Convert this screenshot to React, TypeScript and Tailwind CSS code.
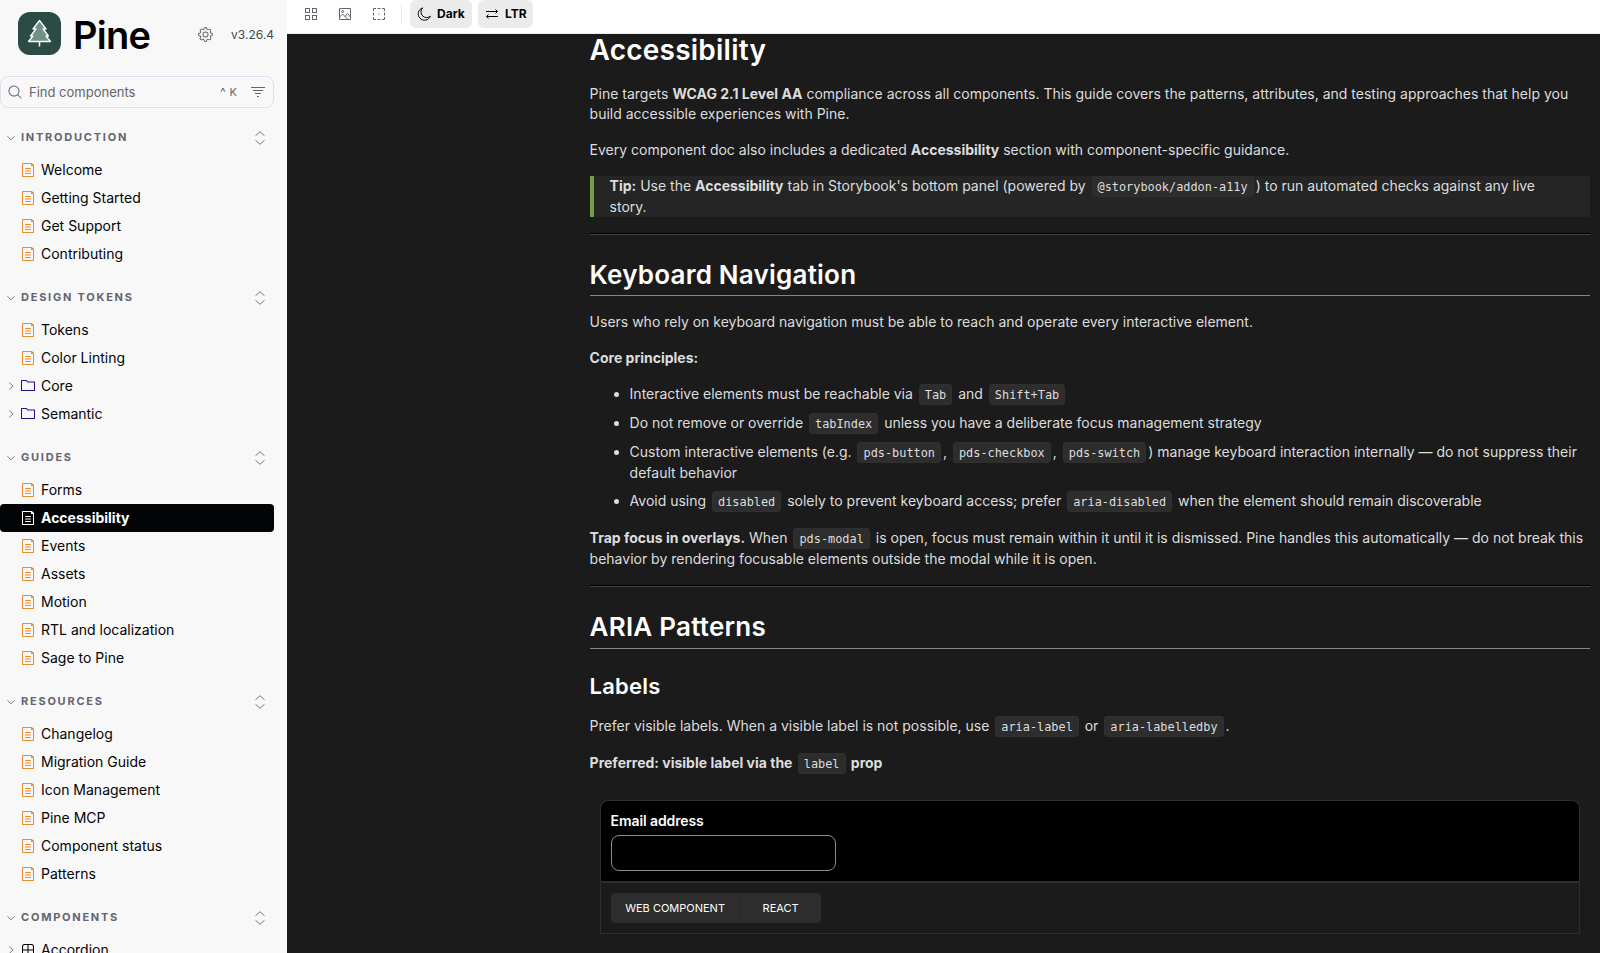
import { clsx } from "clsx"
import type { ReactNode } from "react"
import { BsGear } from "react-icons/bs"

type Item = { label: string; kind?: "doc" | "folder" | "component"; active?: boolean }

const sections: { title: string; items: Item[] }[] = [
  {
    title: "Introduction",
    items: [{ label: "Welcome" }, { label: "Getting Started" }, { label: "Get Support" }, { label: "Contributing" }],
  },
  {
    title: "Design Tokens",
    items: [
      { label: "Tokens" },
      { label: "Color Linting" },
      { label: "Core", kind: "folder" },
      { label: "Semantic", kind: "folder" },
    ],
  },
  {
    title: "Guides",
    items: [
      { label: "Forms" },
      { label: "Accessibility", active: true },
      { label: "Events" },
      { label: "Assets" },
      { label: "Motion" },
      { label: "RTL and localization" },
      { label: "Sage to Pine" },
    ],
  },
  {
    title: "Resources",
    items: [
      { label: "Changelog" },
      { label: "Migration Guide" },
      { label: "Icon Management" },
      { label: "Pine MCP" },
      { label: "Component status" },
      { label: "Patterns" },
    ],
  },
  { title: "Components", items: [{ label: "Accordion", kind: "component" }] },
]

function Icon({ children, className }: { children: ReactNode; className?: string }) {
  return (
    <svg viewBox="0 0 14 14" className={clsx("size-3.5 shrink-0", className)} fill="currentColor">
      {children}
    </svg>
  )
}

function ItemIcon({ item }: { item: Item }) {
  if (item.kind === "folder") {
    return (
      <Icon className="text-[#2d0a80]">
        <path d="M6.586 3.504l-1.5-1.5H1v9h12v-7.5H6.586zm.414-1L5.793 1.297a1 1 0 00-.707-.293H.5a.5.5 0 00-.5.5v10a.5.5 0 00.5.5h13a.5.5 0 00.5-.5v-8.5a.5.5 0 00-.5-.5H7z" fillRule="evenodd" />
      </Icon>
    )
  }
  if (item.kind === "component") {
    return (
      <Icon className="text-black">
        <path d="M3.5 1.004a2.5 2.5 0 00-2.5 2.5v7a2.5 2.5 0 002.5 2.5h7a2.5 2.5 0 002.5-2.5v-7a2.5 2.5 0 00-2.5-2.5h-7zm8.5 5.5H7.5v-4.5h3a1.5 1.5 0 011.5 1.5v3zm0 1v3a1.5 1.5 0 01-1.5 1.5h-3v-4.5H12zm-5.5 4.5v-4.5H2v3a1.5 1.5 0 001.5 1.5h3zM2 6.504h4.5v-4.5h-3a1.5 1.5 0 00-1.5 1.5v3z" fillRule="evenodd" />
      </Icon>
    )
  }
  return (
    <Icon className={item.active ? "text-white" : "text-[#eb8c2d]"}>
      <path d="M4 5.5a.5.5 0 01.5-.5h5a.5.5 0 010 1h-5a.5.5 0 01-.5-.5zM4.5 7.5a.5.5 0 000 1h5a.5.5 0 000-1h-5zM4 10.5a.5.5 0 01.5-.5h5a.5.5 0 010 1h-5a.5.5 0 01-.5-.5z" />
      <path d="M1.5 0a.5.5 0 00-.5.5v13a.5.5 0 00.5.5h11a.5.5 0 00.5-.5V2.207a.5.5 0 00-.146-.353L11.146.146A.5.5 0 0010.793 0H1.5zM2 1h8v1.5a.5.5 0 00.5.5H12v10H2V1z" fillRule="evenodd" />
    </Icon>
  )
}

function Chevron({ className }: { className?: string }) {
  return (
    <svg viewBox="0 0 8 8" className={clsx("size-2 shrink-0 text-[#73767d]", className)} fill="none" stroke="currentColor">
      <path d="M.5 2.3 4 5.8l3.5-3.5" />
    </svg>
  )
}

function Section({ title, items }: { title: string; items: Item[] }) {
  return (
    <div className="mb-[15px]">
      <div className="flex h-7 mb-[5px] items-center pl-[7px] pr-[7px]">
        <Chevron className="mr-1.5 mt-0.5" />
        <span className="text-[11px] font-bold tracking-[1.76px] uppercase text-[#62656f]">{title}</span>
        <Icon className="ml-auto mt-0.5 text-[#73767d]">
          <path d="M2.5 4.8 7 .7l4.5 4.1M2.5 9.2 7 13.3l4.5-4.1" fill="none" stroke="currentColor" />
        </Icon>
      </div>
      {items.map((item) => (
        <div
          key={item.label}
          className={clsx(
            "flex h-7 items-center rounded pl-[7px] text-sm",
            item.active ? "bg-[#030406] font-bold text-white" : "text-[#030406]"
          )}
        >
          <span className="flex w-3.5">
            {(item.kind === "folder" || item.kind === "component") && <Chevron className="-rotate-90" />}
          </span>
          <ItemIcon item={item} />
          <span className="ml-1.5">{item.label}</span>
        </div>
      ))}
    </div>
  )
}

function Sidebar() {
  return (
    <aside className="w-[287px] shrink-0 overflow-hidden bg-[#f8f8f8] pr-[13px]">
      <div className="flex h-[67px] items-center pl-[18px]">
        <svg viewBox="0 0 43 43" className="size-[43px]">
          <rect width="43" height="43" rx="12" fill="#2b4c44" />
          <path d="M21.5 8.500 28 17h-3l5.500 7h-2.500l4.500 5.500h-22L15 24h-2.500L18 17h-3z" fill="#6f9186" stroke="#fff" strokeWidth="1.300" strokeLinejoin="round" />
          <path d="M21.500 29.500v5" stroke="#fff" strokeWidth="1.500" />
        </svg>
        <span className="mt-[3px] ml-3 w-[125px] text-[38px] leading-10 font-semibold tracking-[-0.7px] text-black">Pine</span>
        <BsGear className="mt-px size-[15px] text-[#62656f]" />
        <span className="mt-[3px] ml-auto text-xs text-[#45484f]">v3.26.4</span>
      </div>
      <div className="mt-[9px] flex h-8 items-center rounded-lg border border-[#d9e1ef] pl-[7px] pr-2 text-[#62656f]">
        <Icon>
          <path d="M9.544 10.206a5.5 5.5 0 11.662-.662.5.5 0 01.148.102l3 3a.5.5 0 01-.708.708l-3-3a.5.5 0 01-.102-.148zM10.500 6a4.500 4.500 0 11-9 0 4.500 4.500 0 019 0z" fillRule="evenodd" />
        </Icon>
        <span className="mt-0.5 ml-[7px] text-[13px]">Find components</span>
        <span className="ml-auto flex gap-1 text-[11px]">
          <span className="text-xs">^</span>
          <span>K</span>
        </span>
        <Icon className="ml-[14px]">
          <path d="M0 2h14v1H0zM2 5h10v1H2zM4 8h6v1H4zM6 11h2v1H6z" />
        </Icon>
      </div>
      <nav className="mt-[15px]">
        {sections.map((s) => (
          <Section key={s.title} {...s} />
        ))}
      </nav>
    </aside>
  )
}

function Toolbar() {
  return (
    <header className="flex h-[34px] shrink-0 items-start border-b border-[#ececec] bg-white text-xs font-bold text-[#030406]">
      <div className="flex h-7 items-center gap-5 pl-[17px] text-[#62656f]">
        <Icon>
          <path d="M1 1h5v5H1zM2 2v3h3V2zM8 1h5v5H8zM9 2v3h3V2zM1 8h5v5H1zM2 9v3h3V9zM8 8h5v5H8zM9 9v3h3V9z" fillRule="evenodd" />
        </Icon>
        <Icon>
          <path d="M1.500 1.500h11v11h-11zM1.500 10l3-3 5.500 5.500M7 9.500l2.500-3 3 3.500" fill="none" stroke="currentColor" />
          <circle cx="4.700" cy="4.500" r="1" fill="none" stroke="currentColor" />
        </Icon>
        <Icon>
          <path d="M1.500 4V1.500H4M10 1.500h2.500V4M12.500 10v2.500H10M4 12.500H1.500V10M5.500 1.500h3M5.500 12.500h3M1.500 5.500v3M12.500 5.500v3" fill="none" stroke="currentColor" />
          <path d="M6.500 6.500h1v1h-1z" />
        </Icon>
      </div>
      <div className="mt-1 ml-[15px] h-5 w-px bg-[#ececec]" />
      <button className="ml-2 flex h-7 w-[62px] items-center gap-1.5 rounded-md bg-[#ebebeb] pl-[7px]">
        <Icon>
          <path d="M5.600.900a6.300 6.300 0 1 0 7.800 8.300A5.700 5.700 0 0 1 5.600.900z" fill="none" stroke="currentColor" strokeLinejoin="round" />
        </Icon>
        Dark
      </button>
      <button className="ml-1.5 flex h-7 w-[55px] items-center gap-1.5 rounded-md bg-[#ebebeb] pl-[7px]">
        <Icon>
          <path d="M1 4.500h11.500M10.500 2.500l2 2-2 2M13 9.500H1.500M3.500 7.500l-2 2 2 2" fill="none" stroke="currentColor" />
        </Icon>
        LTR
      </button>
    </header>
  )
}

function Code({ children }: { children: ReactNode }) {
  return (
    <code className="mx-0.5 inline-block rounded-[3px] border border-[#303030] bg-[#2d2d2d] px-[5px] pt-1 pb-0.5 font-['DejaVu_Sans_Mono',monospace] text-[11.88px] leading-[13px] font-normal">
      {children}
    </code>
  )
}

function Rule() {
  return (
    <div className="mt-4">
      <div className="h-px bg-black" />
      <div className="h-px bg-[#444]" />
    </div>
  )
}

function Heading({ children, className }: { children: ReactNode; className?: string }) {
  return (
    <h2 className={clsx("mt-6 border-b border-[#858585] text-[26px] leading-8 font-semibold tracking-[0.22px] text-white", className)}>
      {children}
    </h2>
  )
}

function Preview() {
  return (
    <div className="mt-[16px] rounded-[10px] border border-[#191919] px-[9px] pt-[9px] pb-[10px]">
      <div className="h-[81px] rounded-t-lg border border-b-0 border-[#2d2d2d] bg-black px-2.5 pt-2.5">
        <label className="block text-sm leading-5 font-semibold tracking-[-0.1px] text-white">Email address</label>
        <input className="mt-1 block h-9 w-[225px] rounded-lg border border-[#8a8a8a]" />
      </div>
      <div className="h-[53px] border border-t-2 border-[#2d2d2d] px-2.5 pt-2.5">
        <div className="flex h-[30px] w-[210px] rounded bg-[#2d2d2d] text-[11px] leading-[30px] text-white">
          <span className="w-[130px] border-r border-[#262626] text-center">WEB COMPONENT</span>
          <span className="grow text-center">REACT</span>
        </div>
      </div>
    </div>
  )
}

function Docs() {
  return (
    <main className="grow overflow-hidden bg-[#1b1b1b] pl-[302.6px] text-sm whitespace-nowrap text-[#ddd]">
      <div className="w-[1000px]">
        <h1 className="text-[28px] leading-8 font-semibold tracking-[0.22px] text-white">Accessibility</h1>
        <p className="mt-[18px]">
          Pine targets <b>WCAG 2.1 Level AA</b> compliance across all components. This guide covers the patterns, attributes, and testing approaches that help you
          <br />
          build accessible experiences with Pine.
        </p>
        <p className="mt-4">
          Every component doc also includes a dedicated <b>Accessibility</b> section with component-specific guidance.
        </p>
        <blockquote className="mt-4 border-l-4 border-[#739f43] bg-[#252525] pl-4">
          <b>Tip:</b> Use the <b>Accessibility</b> tab in Storybook's bottom panel (powered by <Code>@storybook/addon-a11y</Code>) to run automated checks against any live
          <br />
          story.
        </blockquote>
        <Rule />
        <Heading className="pb-1">Keyboard Navigation</Heading>
        <p className="mt-4">Users who rely on keyboard navigation must be able to reach and operate every interactive element.</p>
        <p className="mt-4">
          <b>Core principles:</b>
        </p>
        <ul className="mt-4 list-disc space-y-2 pl-10">
          <li>
            Interactive elements must be reachable via <Code>Tab</Code> and <Code>Shift+Tab</Code>
          </li>
          <li>
            Do not remove or override <Code>tabIndex</Code> unless you have a deliberate focus management strategy
          </li>
          <li>
            Custom interactive elements (e.g. <Code>pds-button</Code>, <Code>pds-checkbox</Code>, <Code>pds-switch</Code>) manage keyboard interaction internally — do not suppress their
            <br />
            default behavior
          </li>
          <li>
            Avoid using <Code>disabled</Code> solely to prevent keyboard access; prefer <Code>aria-disabled</Code> when the element should remain discoverable
          </li>
        </ul>
        <p className="mt-4">
          <b>Trap focus in overlays.</b> When <Code>pds-modal</Code> is open, focus must remain within it until it is dismissed. Pine handles this automatically — do not break this
          <br />
          behavior by rendering focusable elements outside the modal while it is open.
        </p>
        <Rule />
        <Heading className="pb-[5px]">ARIA Patterns</Heading>
        <h3 className="mt-[23px] text-[22px] leading-7 font-semibold tracking-[0.2px] text-white">Labels</h3>
        <p className="mt-4">
          Prefer visible labels. When a visible label is not possible, use <Code>aria-label</Code> or <Code>aria-labelledby</Code>.
        </p>
        <p className="mt-4 font-bold">
          Preferred: visible label via the <Code>label</Code> prop
        </p>
        <Preview />
      </div>
    </main>
  )
}

export default function App() {
  return (
    <div className="flex h-[953px] w-[1600px] overflow-hidden font-[Inter,sans-serif]">
      <Sidebar />
      <div className="flex min-w-0 grow flex-col">
        <Toolbar />
        <Docs />
      </div>
    </div>
  )
}
